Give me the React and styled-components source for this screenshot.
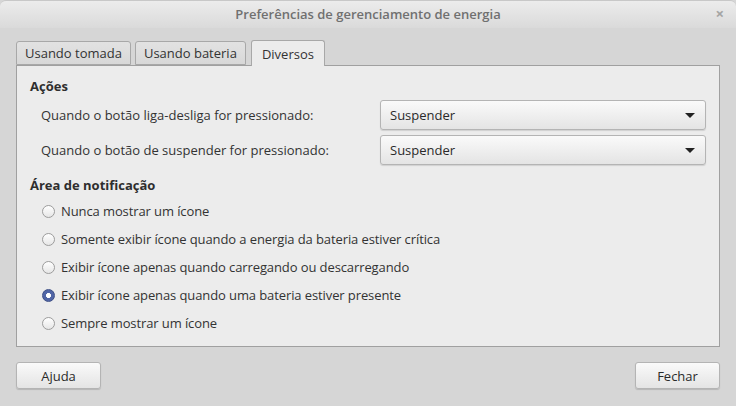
import styled, { createGlobalStyle } from "styled-components";

const Global = createGlobalStyle`
    html, body {
        margin: 0;
        padding: 0;
        background: #d6d6d6;
    }
    body {
        font-family: "Open Sans", "DejaVu Sans", sans-serif;
        font-size: 13px;
        color: #3c3c3c;
    }
`;

const actions = [
    "Quando o botão liga-desliga for pressionado:",
    "Quando o botão de suspender for pressionado:",
];

const options = [
    "Nunca mostrar um ícone",
    "Somente exibir ícone quando a energia da bateria estiver crítica",
    "Exibir ícone apenas quando carregando ou descarregando",
    "Exibir ícone apenas quando uma bateria estiver presente",
    "Sempre mostrar um ícone",
];

function App() {
    return (
        <Window>
            <Global />
            <TitleBar>
                <Title>Preferências de gerenciamento de energia</Title>
                <Close>×</Close>
            </TitleBar>
            <Body>
                <Tabs>
                    <Tab>Usando tomada</Tab>
                    <Tab>Usando bateria</Tab>
                    <Tab active>Diversos</Tab>
                </Tabs>
                <Panel>
                    <Heading>Ações</Heading>
                    {actions.map((a) => (
                        <ActionRow key={a}>
                            <Label>{a}</Label>
                            <Combo>
                                <span>Suspender</span>
                                <Arrow />
                            </Combo>
                        </ActionRow>
                    ))}
                    <Heading second>Área de notificação</Heading>
                    <RadioList>
                        {options.map((o, i) => (
                            <RadioRow key={o}>
                                <Radio checked={i === 3} />
                                {o}
                            </RadioRow>
                        ))}
                    </RadioList>
                </Panel>
                <Footer>
                    <Button>Ajuda</Button>
                    <Button>Fechar</Button>
                </Footer>
            </Body>
        </Window>
    );
}

const Window = styled.div`
    width: 736px;
    height: 406px;
    display: flex;
    flex-direction: column;
    background: #d6d6d6;
    overflow: hidden;
`;

const TitleBar = styled.div`
    height: 28px;
    flex-shrink: 0;
    display: flex;
    align-items: center;
    justify-content: center;
    position: relative;
    background: linear-gradient(#ececec, #dadada);
    border-top: 1px solid #c8c8c8;
    border-radius: 6px 6px 0 0;
    box-sizing: border-box;
`;

const Title = styled.div`
    color: #707070;
    font-size: 13px;
    font-weight: 600;
    padding-bottom: 2px;
`;

const Close = styled.div`
    position: absolute;
    right: 12px;
    top: 2px;
    color: #a4a4a4;
    font-size: 15px;
    font-weight: 700;
`;

const Body = styled.div`
    flex: 1;
    display: flex;
    flex-direction: column;
    padding: 12px 16px 0 16px;
`;

const Tabs = styled.div`
    display: flex;
    align-items: flex-end;
    gap: 4px;
    height: 25px;
    position: relative;
    z-index: 1;
`;

const Tab = styled.div`
    height: ${(p) => (p.active ? "26px" : "24px")};
    margin-bottom: ${(p) => (p.active ? "-1px" : "0")};
    margin-left: ${(p) => (p.active ? "1px" : "0")};
    padding: 0 ${(p) => (p.active ? "10px" : "8px")};
    box-sizing: border-box;
    display: flex;
    align-items: center;
    border: 1px solid #a8a8a8;
    border-bottom: ${(p) => (p.active ? "none" : "1px solid #a8a8a8")};
    border-radius: 3px 3px 0 0;
    background: ${(p) => (p.active ? "#ececec" : "linear-gradient(#e2e2e2, #d8d8d8)")};
    color: #333;
`;

const Panel = styled.div`
    height: 282px;
    box-sizing: border-box;
    border: 1px solid #a0a0a0;
    background: #ececec;
    padding: 10px 13px 0 13px;
    display: flex;
    flex-direction: column;
`;

const Heading = styled.div`
    font-weight: 700;
    color: #2e2e2e;
    height: 20px;
    line-height: 20px;
    margin-top: ${(p) => (p.second ? "9px" : "0")};
`;

const ActionRow = styled.div`
    display: flex;
    align-items: center;
    justify-content: space-between;
    padding-left: 11px;
    margin-top: 3px;
    height: 32px;
`;

const Label = styled.div`
    color: #333;
`;

const Combo = styled.div`
    width: 326px;
    height: 30px;
    box-sizing: border-box;
    border: 1px solid #b4b4b4;
    border-radius: 3px;
    background: linear-gradient(#fafafa, #e4e4e4);
    box-shadow: 0 1px 1px rgba(0, 0, 0, 0.12);
    display: flex;
    align-items: center;
    justify-content: space-between;
    padding: 0 10px 0 9px;
    color: #2a2a2a;
`;

const Arrow = styled.div`
    width: 0;
    height: 0;
    border-left: 5px solid transparent;
    border-right: 5px solid transparent;
    border-top: 5px solid #222;
`;

const RadioList = styled.div`
    display: flex;
    flex-direction: column;
    padding-left: 12px;
    margin-top: 2px;
`;

const RadioRow = styled.div`
    display: flex;
    align-items: center;
    gap: 6px;
    height: 28px;
    color: #333;
    letter-spacing: -0.1px;
`;

const Radio = styled.span`
    width: 13px;
    height: 13px;
    box-sizing: border-box;
    border-radius: 50%;
    border: 1px solid ${(p) => (p.checked ? "#3d4f86" : "#9c9c9c")};
    background: ${(p) =>
        p.checked
            ? "radial-gradient(circle, #ffffff 0 2.2px, #5065a6 2.8px)"
            : "linear-gradient(#ffffff, #e6e6e6)"};
    flex-shrink: 0;
`;

const Footer = styled.div`
    display: flex;
    justify-content: space-between;
    padding-top: 15px;
`;

const Button = styled.div`
    width: 85px;
    height: 27px;
    box-sizing: border-box;
    border: 1px solid #b4b4b4;
    border-radius: 3px;
    background: linear-gradient(#fafafa, #e4e4e4);
    box-shadow: 0 1px 1px rgba(0, 0, 0, 0.15);
    display: flex;
    align-items: center;
    justify-content: center;
    color: #2a2a2a;
`;

export default App;
